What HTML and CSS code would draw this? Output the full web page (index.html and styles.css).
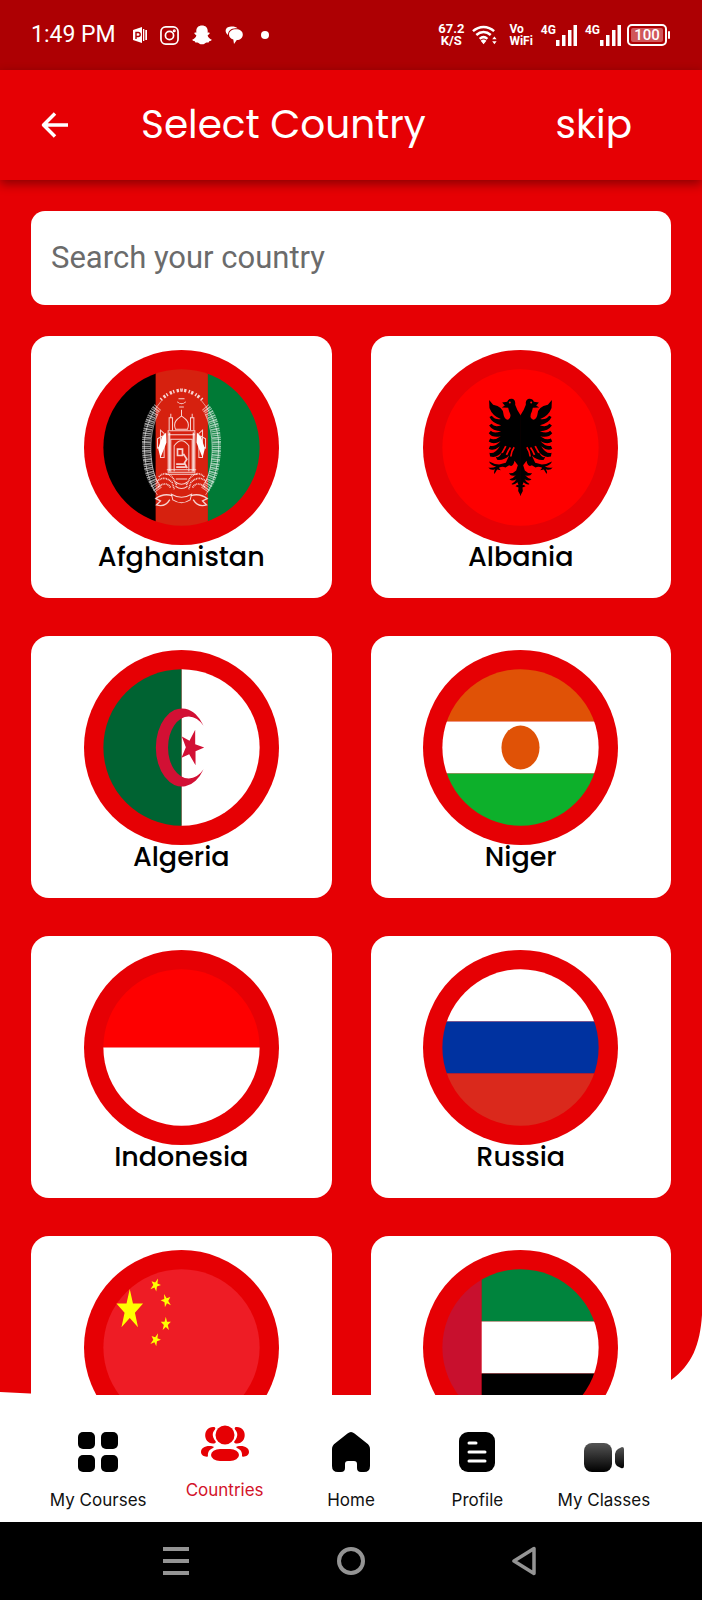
FILE: index.html
```html
<!DOCTYPE html>
<html lang="en">
<head>
<meta charset="utf-8">
<meta name="viewport" content="width=device-width, initial-scale=1">
<title>Select Country</title>
<link rel="stylesheet" href="styles.css">
</head>
<body>
<svg class="defs" width="0" height="0" aria-hidden="true">
  <defs>
    <clipPath id="disc"><circle r="234"/></clipPath>
    <path id="star" d="M0-100 23-31H95L37 12 59 81 0 38-59 81-37 12-95-31H-23Z"/>
    <linearGradient id="cam" x1="0" y1="0" x2="0" y2="1"><stop offset="0" stop-color="#555"/><stop offset="1" stop-color="#000"/></linearGradient>
  </defs>
</svg>
<div class="app">
  <div class="status">
    <div class="status-left">
      <time class="clock">1:49 PM</time>
      <svg width="14" height="16" viewBox="0 0 14 16"><path fill="#fff" d="M0 3 9 0V16L0 13ZM10 2h1.300v12H10ZM12.300 3H14v10h-1.700Z"/><path d="M3 12V5.500h2.200a1.800 1.800 0 0 1 0 4H3" fill="none" stroke="#ad0003" stroke-width="1.400"/></svg>
      <svg width="19" height="19" viewBox="0 0 20 20" fill="none" stroke="#fff" stroke-width="1.800"><rect x="1" y="1" width="18" height="18" rx="5"/><circle cx="10" cy="10" r="4.300"/><circle cx="15" cy="5" r=".7"/></svg>
      <svg width="20" height="20" viewBox="0 0 20 20"><path fill="#fff" d="M10 .5c3.500 0 5.700 2.200 5.700 5.300v2c1-.5 2.400 0 1.800 1L15.600 10.500c.7 2.100 2.100 3.400 4.200 4.200-.3 1-1.200 1.200-2.600 1.500l-.6 1.400c-2-.3-2.700 0-3.700.8-1.700 1.200-4.100 1.200-5.800 0-1-.8-1.700-1.100-3.700-.8L2.800 16.200c-1.400-.3-2.300-.5-2.600-1.500 2.100-.8 3.500-2.100 4.200-4.200L2.500 8.800c-.6-1 .8-1.500 1.800-1V5.800C4.300 2.700 6.500.5 10 .5Z"/></svg>
      <svg width="18" height="18" viewBox="0 0 18 18"><path fill="#fff" d="M3 9C-1 6 0 .7 6 .5c3-.1 5.500.5 6.500 2-5.500-1-9.500 2-9.500 6.500ZM11 3.200c4 0 6.800 2 6.800 5.300s-2.600 5.600-6 5.600L9 18l-.7-4.500C5.500 12.600 4 10.900 4 8.500c0-3.300 3-5.300 7-5.300Z"/></svg>
      <span class="dot"></span>
    </div>
    <div class="status-right">
      <div class="mini rate"><span>67.2</span><span>K/S</span></div>
      <svg width="25" height="20" viewBox="0 0 26 20"><g fill="none" stroke="#fff" stroke-width="2.600"><path d="M1 6C7.500.2 16.500.2 23 6M4.500 10c4.500-4 10.500-4 15 0M8 14c2.400-2.200 5.600-2.200 8 0"/></g><path fill="#fff" d="M9 16q3-2.500 6 0l-3 3.500ZM21 14.500l2.300-3 2.300 3ZM21 16.500l2.300 3 2.300-3Z"/></svg>
      <div class="mini vowifi"><span>Vo</span><span>WiFi</span></div>
      <div class="signal"><span>4G</span><svg width="21" height="22" viewBox="0 0 21 22" fill="#fff"><path d="M0 16h3.500v6H0ZM6 11h3.500v11H6ZM12 6h3.500v16H12ZM17.500 1H21v21h-3.500Z"/></svg></div>
      <div class="signal"><span>4G</span><svg width="21" height="22" viewBox="0 0 21 22" fill="#fff"><path d="M0 16h3.500v6H0ZM6 11h3.500v11H6ZM12 6h3.500v16H12ZM17.500 1H21v21h-3.500Z"/></svg></div>
      <div class="battery"><span>100</span></div>
    </div>
  </div>

  <header class="topbar">
    <button class="back" aria-label="Back"><svg width="27" height="26" viewBox="0 0 27 26" fill="none" stroke="#fff" stroke-width="3.500" stroke-linejoin="round"><path d="M27 13H3M14 1.500 2.500 13 14 24.500"/></svg></button>
    <h1 class="title">Select Country</h1>
    <button class="skip">skip</button>
  </header>

  <main class="content">
    <svg class="edge" viewBox="0 0 702 80" preserveAspectRatio="none" aria-hidden="true"><path fill="#fff" d="M702 0C700 30 692 50 671 65 655 78 640 79 620 80H702ZM0 77 60 80H0Z"/></svg>
    <input class="search" type="search" placeholder="Search your country" aria-label="Search your country">
    <div class="grid">
      <button class="card">
        <svg class="flag" viewBox="-292 -292 584 584"><g clip-path="url(#disc)"><path d="M-240-240H-77V240H-240Z"/><path fill="#d6210f" d="M-77-240H79V240H-77Z"/><path fill="#007a36" d="M79-240H240V240H79Z"/>
          <g fill="none" stroke="#fff" stroke-opacity=".8" stroke-width="3">
            <g id="wreath"><path stroke-width="26" stroke-opacity=".6" stroke-dasharray="3 3 5 2" d="M-71-121C-103-85-111-20-102 40-98 80-85 106-69 128"/><path stroke-width="2" d="M-60-140C-98-95-115-40-111 10-108 62-96 110-72 142M-71-100C-92-55-96 0-88 50-84 77-76 98-65 112"/><path stroke-width="10" stroke-dasharray="4 7 7 4" d="M-62-143C-42-162-22-170 0-172"/><path d="M-63 30V-52L-52-42V30ZM-58-34V-6l-14 8V-26ZM-37-52V-89h10v37M-32-89v-12"/><path stroke-width="5" stroke-dasharray="3 2" d="M-68 88Q-47 67-25 92L-14 114M-74 101Q-50 82-28 105L-21 127M-70 118Q-46 99-32 121"/><path stroke-width="4" d="M-28 144Q-55 136-77 153L-63 160-75 172Q-49 180-35 156"/></g>
            <use href="#wreath" transform="scale(-1 1)"/>
            <path d="M-40 74V-50H40V74ZM-32 72V-25H32V72M-22 71V-5Q0-36 22-5V71M-48 80H48M-44 67H44M-40-38H40M-18-55C-27-78-10-87 0-94 10-87 27-78 18-55ZM0-95V-113M-13-137Q0-125 13-137M-9-146H9M-7-121H7M-17 94H17M-17 104Q0 116 17 104M-18 116Q0 130 18 116M-30 140Q0 158 30 140L26 157Q0 174-26 157Z"/>
            <path stroke-width="5" d="M-36 72V-45M36 72V-45M-12 5H3V24H-12ZM6 19l10 16-7 11 8 16M-16 50H10M-16 59H13"/>
            <path stroke="none" fill="#fff" d="M-58-32-46-45-45-15-63 31-70 3ZM58-32 46-45 45-15 63 31 70 3Z"/>
          </g></g></svg>
        <span class="name">Afghanistan</span>
      </button>
      <button class="card">
        <svg class="flag" viewBox="-292 -292 584 584"><circle r="234" fill="#fe0000"/>
          <g id="eagle"><path d="M1 145-7 130-6 120-15 116Q-10 111-6 113L-9 104Q-22 115-27 109-18 105-12 95-25 103-33 95-21 92-14 83-28 88-35 77-22 79-13 69L-8 53-18 40Q-22 61-34 53L-45 60Q-54 55-65 61L-59 68-70 66-78 79Q-81 72-76 65-90 70-96 60-84 62-73 57-91 53-94 42-80 50-64 51L-44 46-34 24Q-48 39-70 37L-74 28Q-63 33-55 13-70 33-91 27L-93 16Q-76 20-62-4-81 12-95 4L-91-5Q-77-1-60-19-81-7-95-18L-91-27Q-78-20-59-34-84-28-95-43L-89-50Q-80-41-58-49-83-49-94-66L-87-71Q-77-59-58-67-84-71-93-91L-86-95Q-76-82-59-85-84-94-93-118L-94-142-82-128Q-52-122-51-100-49-84-38-83-24-90-34-108L-37-119-56-120-47-126-55-135-40-137Q-37-147-25-146-14-143-16-128-11-112 1-95Z"/><path fill="none" stroke="#fe0000" stroke-width="5" d="M-29 27Q-27 10-19-1M-42 22Q-37 9-30 0M-55 16Q-48 4-44-4"/><circle cx="-32" cy="-135" r="3" fill="#fe0000"/></g>
          <use href="#eagle" transform="scale(-1 1)"/></svg>
        <span class="name">Albania</span>
      </button>
      <button class="card">
        <svg class="flag" viewBox="-292 -292 584 584"><g clip-path="url(#disc)"><path fill="#fff" d="M0-240H240V240H0Z"/><path fill="#006332" d="M-240-240H0V240H-240Z"/><path fill="#d21034" d="M66-65A78 117 0 1 0 66 65 62 93 0 1 1 66-65ZM68 0 42 11V53L23 20 0 31 13-1 1-33 24-20 41-53V-10Z"/></g></svg>
        <span class="name">Algeria</span>
      </button>
      <button class="card">
        <svg class="flag" viewBox="-292 -292 584 584"><g clip-path="url(#disc)"><path fill="#e05206" d="M-240-240H240V-78H-240Z"/><path fill="#fff" d="M-240-78H240V78H-240Z"/><path fill="#0db02b" d="M-240 78H240V240H-240Z"/><ellipse rx="57" ry="66" fill="#e05206"/></g></svg>
        <span class="name">Niger</span>
      </button>
      <button class="card">
        <svg class="flag" viewBox="-292 -292 584 584"><g clip-path="url(#disc)"><path fill="#fe0000" d="M-240-240H240V0H-240Z"/><path fill="#fff" d="M-240 0H240V240H-240Z"/></g></svg>
        <span class="name">Indonesia</span>
      </button>
      <button class="card">
        <svg class="flag" viewBox="-292 -292 584 584"><g clip-path="url(#disc)"><path fill="#fff" d="M-240-240H240V-78H-240Z"/><path fill="#0032a0" d="M-240-78H240V78H-240Z"/><path fill="#da291c" d="M-240 78H240V240H-240Z"/></g></svg>
        <span class="name">Russia</span>
      </button>
      <button class="card" aria-label="China">
        <svg class="flag" viewBox="-292 -292 584 584"><circle r="234" fill="#ee1c25"/><g fill="#ff0"><use href="#star" transform="translate(-155 -112) scale(.42 .63)"/><use href="#star" transform="translate(-78 -187) rotate(22) scale(.16 .21)"/><use href="#star" transform="translate(-46 -140) rotate(-18) scale(.16 .21)"/><use href="#star" transform="translate(-47 -70) scale(.16 .22)"/><use href="#star" transform="translate(-78 -23) rotate(22) scale(.16 .21)"/></g></svg>
      </button>
      <button class="card" aria-label="United Arab Emirates">
        <svg class="flag" viewBox="-292 -292 584 584"><g clip-path="url(#disc)"><path fill="#00843d" d="M-117-240H240V-78H-117Z"/><path fill="#fff" d="M-117-78H240V78H-117Z"/><path d="M-117 78H240V240H-117Z"/><path fill="#c8102e" d="M-240-240H-117V240H-240Z"/></g></svg>
      </button>
    </div>
  </main>

  <nav class="tabs">
    <a class="tab" href="#courses"><svg width="40" height="40" viewBox="0 0 40 40"><rect width="17" height="17" rx="5"/><rect x="23" width="17" height="17" rx="5"/><rect y="23" width="17" height="17" rx="5"/><rect x="23" y="23" width="17" height="17" rx="5"/></svg><span>My Courses</span></a>
    <a class="tab active" href="#countries" aria-current="page"><svg width="48" height="40" viewBox="0 0 48 40" fill="#e60004"><circle cx="24" cy="13" r="9.500"/><rect x="10" y="27" width="28" height="12" rx="9" ry="6"/><path d="M13 5C2 4 1 21 12 21.500 15 21.500 15.500 20 14 18.500 11 14 11 11 14 7.500Q15 5.500 13 5ZM35 5c11-1 12 16 1 16.500-3 0-3.500-1.500-2-3 3-4.500 3-7.500 0-11Q33 5.500 35 5ZM12 24.500C5 23 0 26 0 30c0 3.500 4 5.200 7 4.500-.5-4 1-7 5-8.500 1-.5 1-1.300 0-1.500ZM36 24.500c7-1.500 12 1.500 12 5.500 0 3.500-4 5.200-7 4.500.5-4-1-7-5-8.500-1-.5-1-1.300 0-1.500Z"/></svg><span>Countries</span></a>
    <a class="tab" href="#home"><svg width="38" height="40" viewBox="0 0 38 40"><path d="M15.500 1.500Q19-1.500 22.500 1.500L34.500 11Q38 13.500 38 17V34Q38 40 32 40H29Q25 40 25 36V32Q25 29 22 29H16Q13 29 13 32V36Q13 40 9 40H6Q0 40 0 34V17Q0 13.500 3.500 11Z"/></svg><span>Home</span></a>
    <a class="tab" href="#profile"><svg width="36" height="40" viewBox="0 0 36 40"><rect width="36" height="40" rx="9"/><path stroke="#fff" stroke-width="3" stroke-linecap="round" d="M10 11h7M10 20h16M10 29h16"/></svg><span>Profile</span></a>
    <a class="tab" href="#classes"><svg width="40" height="40" viewBox="0 0 40 40" fill="url(#cam)"><rect y="11" width="28" height="29" rx="8"/><path d="M31 22Q31 19 34 17L38 15Q40 15 40 17V34Q40 37 37 36L33 34Q31 32 31 30Z"/></svg><span>My Classes</span></a>
  </nav>

  <div class="system">
    <button aria-label="Recent apps"><svg width="28" height="28" viewBox="0 0 28 28" stroke="#949494" stroke-width="4"><path d="M1 2h26M1 14h26M1 26h26"/></svg></button>
    <button aria-label="Home screen"><svg width="28" height="28" viewBox="0 0 28 28" fill="none" stroke="#949494" stroke-width="4"><circle cx="14" cy="14" r="12"/></svg></button>
    <button aria-label="Go back"><svg width="28" height="30" viewBox="0 0 28 30" fill="none" stroke="#949494" stroke-width="3.500" stroke-linejoin="round"><path d="M22 2.500v25L2 15Z"/></svg></button>
  </div>
</div>
</body>
</html>
```

FILE: styles.css
```css
* { box-sizing: border-box; }

body {
  margin: 0;
  background: #fff;
  font-family: Poppins, Inter, "Liberation Sans", sans-serif;
  color: #000;
}

button {
  border: 0;
  padding: 0;
  background: none;
  font: inherit;
  color: inherit;
  cursor: pointer;
}

svg { display: block; flex: none; }

.defs { position: absolute; }

.app {
  display: flex;
  flex-direction: column;
  height: 100vh;
  overflow: hidden;
}

.status {
  display: flex;
  justify-content: space-between;
  align-items: center;
  flex: none;
  height: 70px;
  padding: 0 31px;
  background: #ad0003;
  color: #fff;
  font-family: Roboto, sans-serif;
}

.status-left { display: flex; align-items: center; }
.status-left svg { margin-right: 13px; }
.clock { width: 102px; font-size: 23px; line-height: 28px; }
.dot { width: 8px; height: 8px; margin-left: 5px; border-radius: 50%; background: #fff; }

.status-right { display: flex; align-items: center; gap: 8px; }
.mini { display: flex; flex-direction: column; align-items: center; font-size: 12px; line-height: 12px; font-weight: 700; }
.rate { font-size: 13px; }
.vowifi { align-items: flex-start; margin-left: 4px; }
.signal { display: flex; align-items: flex-start; font-size: 12px; line-height: 12px; font-weight: 700; }

.battery {
  position: relative;
  width: 40px;
  height: 22px;
  margin: 0 4px 0 -2px;
  padding: 2px;
  border: 2px solid #fff;
  border-radius: 5px;
  font-size: 15px;
  font-weight: 500;
  line-height: 14px;
  text-align: center;
}
.battery span { display: block; background: #d0575b; border-radius: 2px; }
.battery::after {
  content: "";
  position: absolute;
  top: 5px;
  right: -5px;
  width: 2px;
  height: 8px;
  border-radius: 1px;
  background: #fff;
}

.topbar {
  display: flex;
  align-items: center;
  flex: none;
  z-index: 1;
  height: 110px;
  padding: 0 70px 0 41px;
  background: #e60004;
  color: #fff;
  box-shadow: 0 4px 10px rgba(0, 0, 0, 0.4);
}
.back { width: 100px; height: 60px; }
.title { flex: 1; margin: 0; font-size: 39px; line-height: 48px; font-weight: 400; }
.skip { font-size: 39px; line-height: 48px; }

.content {
  position: relative;
  z-index: 0;
  flex: 1;
  min-height: 0;
  overflow: hidden;
  padding: 31px 31px 0;
  background: #e60004;
}
.edge {
  position: absolute;
  z-index: -1;
  left: 0;
  bottom: 0;
  width: 100%;
  height: 80px;
}

.search {
  display: block;
  width: 100%;
  height: 94px;
  padding: 0 20px 2px;
  border: 0;
  border-radius: 14px;
  background: #fff;
  font: 31px/36px Roboto, sans-serif;
  color: #222;
  appearance: none;
}
.search::placeholder { color: #6b6b6b; opacity: 1; }

.grid {
  display: grid;
  grid-template-columns: 1fr 1fr;
  gap: 39px;
  margin-top: 31px;
}
.card {
  display: flex;
  flex-direction: column;
  align-items: center;
  min-height: 262px;
  padding: 14px 8px 0;
  border-radius: 18px;
  background: #fff;
}
.grid { row-gap: 38px; }
.flag { width: 195px; height: 195px; border-radius: 50%; background: #e60004; }
.name { margin-top: -2px; font-size: 27px; line-height: 28px; font-weight: 500; }

.tabs {
  display: grid;
  grid-template-columns: repeat(5, 1fr);
  flex: none;
  height: 127px;
  padding: 37px 35px 0;
  background: #fff;
}
.tab {
  display: flex;
  flex-direction: column;
  align-items: center;
  gap: 17px;
  color: #111;
  font-family: Inter, sans-serif;
  font-size: 17px;
  line-height: 22px;
  text-decoration: none;
}
.active { margin-top: -10px; color: #d3132a; }

.system {
  display: flex;
  justify-content: center;
  align-items: center;
  flex: none;
  gap: 147px;
  height: 78px;
  background: #000;
}
```
